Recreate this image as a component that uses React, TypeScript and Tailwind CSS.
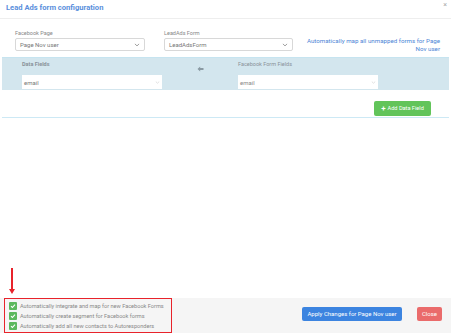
import React from "react";

const Chevron = () => (
  <svg width="6" height="4" viewBox="0 0 6 4" className="shrink-0">
    <path d="M0.9 0.9 L3 2.9 L5.1 0.9" fill="none" stroke="#888" strokeWidth="0.8" />
  </svg>
);

const Check = () => (
  <span className="w-[8px] h-[8px] rounded-[1px] bg-[#5cb85c] flex items-center justify-center shrink-0">
    <svg width="6" height="6" viewBox="0 0 6 6">
      <path d="M1 3.1 L2.4 4.5 L5 1.6" fill="none" stroke="#fff" strokeWidth="1.1" />
    </svg>
  </span>
);

export default function App() {
  return (
    <div
      className="w-[451px] h-[333px] bg-white relative overflow-hidden flex flex-col"
      style={{ fontFamily: "Roboto, 'Liberation Sans', sans-serif" }}
    >
      {/* header */}
      <div className="h-[19px] border-b border-[#eeeeee] flex items-start pl-[6px] pt-[3px] relative shrink-0">
        <span className="text-[7.6px] font-bold text-[#5a8fdc] leading-[10px]">Lead Ads form configuration</span>
        <span className="absolute right-[4px] top-[1px] text-[7px] text-[#aaa] leading-[8px]">×</span>
      </div>

      {/* selects row */}
      <div className="flex items-start mt-[10px] h-[28px] shrink-0">
        <div className="ml-[15px] w-[130px] flex flex-col">
          <span className="text-[5.5px] text-[#888] leading-[8px] mb-[1px]">Facebook Page</span>
          <div className="h-[13px] border border-[#d8d8d8] rounded-[2px] flex items-center justify-between px-[4px]">
            <span className="text-[6px] text-[#777]">Page Nov user</span>
            <Chevron />
          </div>
        </div>
        <div className="ml-[19px] w-[129px] flex flex-col">
          <span className="text-[5.5px] text-[#888] leading-[8px] mb-[1px]">LeadAds Form</span>
          <div className="h-[13px] border border-[#d8d8d8] rounded-[2px] flex items-center justify-between px-[4px]">
            <span className="text-[6px] text-[#777]">LeadAdsForm</span>
            <Chevron />
          </div>
        </div>
        <div className="ml-[2px] w-[145px] mt-[8px] text-right text-[6.2px] leading-[8px] text-[#4d85d6]">
          Automatically map all unmapped forms for Page<br />Nov user
        </div>
      </div>

      {/* mapping band */}
      <div className="mx-[2px] h-[33px] bg-[#d3e6ee] border-t border-[#c6e4f0] flex shrink-0">
        <div className="ml-[20px] w-[140px] flex flex-col">
          <span className="text-[5.5px] font-bold text-[#8a9299] leading-[8px] mt-[2px]">Data Fields</span>
          <div className="mt-[7px] h-[14px] bg-white flex items-center justify-between px-[2px]">
            <span className="text-[6px] text-[#777]">email</span>
            <svg width="5" height="3" viewBox="0 0 5 3"><path d="M0.8 0.6 L2.5 2.2 L4.2 0.6" fill="none" stroke="#ccc" strokeWidth="0.6" /></svg>
          </div>
        </div>
        <div className="w-[76px] flex justify-center pt-[8px]">
          <svg width="7" height="6" viewBox="0 0 7 6">
            <path d="M0.5 3 L3.2 0.6 L3.2 2 L6.5 2 L6.5 4 L3.2 4 L3.2 5.4 Z" fill="#8a9aa3" />
          </svg>
        </div>
        <div className="w-[140px] flex flex-col">
          <span className="text-[5.5px] text-[#8a9299] leading-[8px] mt-[2px]">Facebook Form Fields</span>
          <div className="mt-[7px] h-[14px] bg-white flex items-center justify-between px-[2px]">
            <span className="text-[6px] text-[#888]">email</span>
            <svg width="5" height="3" viewBox="0 0 5 3"><path d="M0.8 0.6 L2.5 2.2 L4.2 0.6" fill="none" stroke="#ccc" strokeWidth="0.6" /></svg>
          </div>
        </div>
      </div>

      {/* add data field */}
      <div className="mx-[2px] h-[28px] border-b border-[#cde9f5] flex justify-end items-start pt-[11px] pr-[18px] shrink-0">
        <div className="h-[15px] w-[57px] bg-[#62c45a] rounded-[2px] flex items-center justify-center gap-[2px]">
          <span className="text-[8px] font-bold text-white leading-[8px]">+</span>
          <span className="text-[5.6px] text-white">Add Data Field</span>
        </div>
      </div>

      <div className="flex-1" />

      {/* footer */}
      <div className="h-[35px] bg-[#f5f5f5] flex items-center shrink-0 relative">
        <div className="ml-[4px] w-[168px] h-[35px] border-[1.5px] border-[#e8232b] flex flex-col justify-center gap-[2px] pl-[4px]">
          {[
            "Automatically integrate and map for new Facebook Forms",
            "Automatically create segment for Facebook forms",
            "Automatically add all new contacts to Autoresponders",
          ].map((t) => (
            <div key={t} className="flex items-center gap-[3px] h-[8px]">
              <Check />
              <span className="text-[5.6px] text-[#888] leading-[8px] whitespace-nowrap">{t}</span>
            </div>
          ))}
        </div>
        <div className="ml-auto flex items-center gap-[15px] mr-[9px] -mt-[4px]">
          <div className="h-[14px] w-[100px] bg-[#3c84e0] rounded-[2px] flex items-center justify-center">
            <span className="text-[6px] text-white">Apply Changes for Page Nov user</span>
          </div>
          <div className="h-[14px] w-[25px] bg-[#ea6b6b] rounded-[2px] flex items-center justify-center">
            <span className="text-[6px] text-white">Close</span>
          </div>
        </div>
      </div>

      {/* red arrow */}
      <div className="absolute left-[9px] top-[268px] flex flex-col items-center">
        <div className="w-[1.5px] h-[21px] bg-[#e8232b]" />
        <svg width="6" height="5" viewBox="0 0 6 5"><path d="M0 0 L6 0 L3 5 Z" fill="#e8232b" /></svg>
      </div>
    </div>
  );
}
